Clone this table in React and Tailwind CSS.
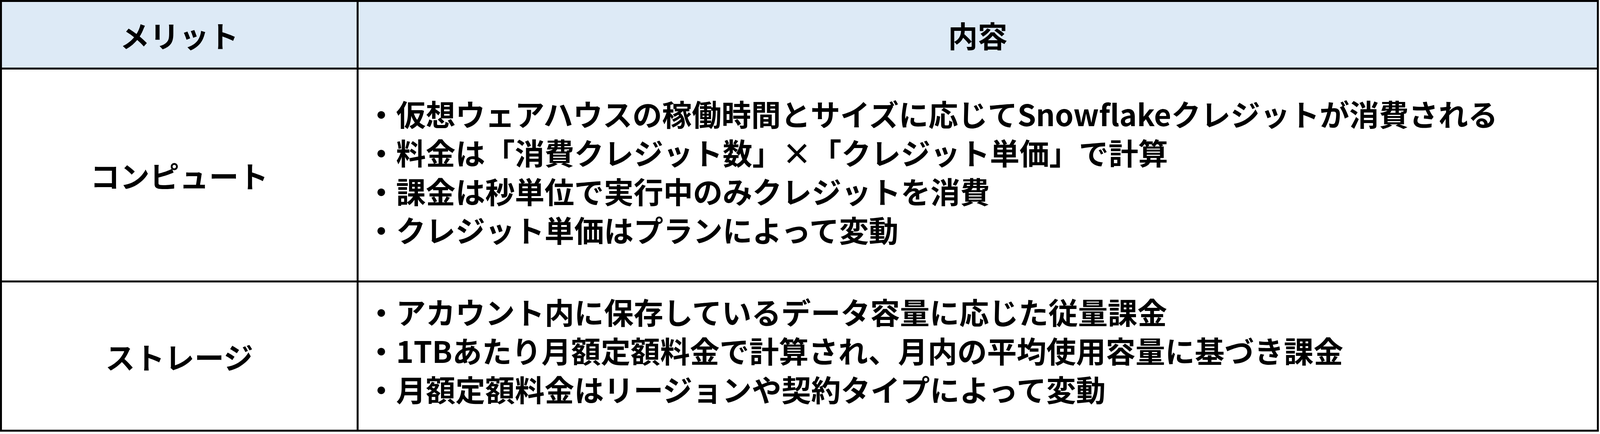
const rows = [
    {
        label: "コンピュート",
        size: "h-[545px] border-b-[5px]",
        pad: "pb-[18px]",
        items: [
            "・仮想ウェアハウスの稼働時間とサイズに応じてSnowflakeクレジットが消費される",
            "・料金は「消費クレジット数」×「クレジット単価」で計算",
            "・課金は秒単位で実行中のみクレジットを消費",
            "・クレジット単価はプランによって変動",
        ],
    },
    {
        label: "ストレージ",
        size: "flex-1",
        pad: "pb-[30px]",
        items: [
            "・アカウント内に保存しているデータ容量に応じた従量課金",
            "・1TBあたり月額定額料金で計算され、月内の平均使用容量に基づき課金",
            "・月額定額料金はリージョンや契約タイプによって変動",
        ],
    },
];

const App = () => {
    return (
        <div className="h-screen flex flex-col overflow-hidden bg-white font-['Noto_Sans_CJK_JP',sans-serif] font-bold text-black">
            <div className="flex-1 mb-[6px] mr-[3px] border-[5px] border-black flex flex-col">
                {/* ヘッダー行 */}
                <div className="flex h-[173px] shrink-0 border-b-[5px] border-black bg-[#ddeaf6]">
                    <div className="w-[913px] shrink-0 border-r-[5px] border-black flex items-center justify-center text-[76px]">
                        メリット
                    </div>
                    <div className="flex-1 min-w-0 flex items-center justify-center text-[76px]">内容</div>
                </div>

                {rows.map((row) => (
                    <div key={row.label} className={`flex shrink-0 border-black ${row.size}`}>
                        <div className="w-[913px] shrink-0 border-r-[5px] border-black flex items-center justify-center text-[76px]">
                            {row.label}
                        </div>
                        <div className={`flex-1 min-w-0 flex flex-col justify-center pl-[20px] text-[76px] leading-[99px] ${row.pad}`}>
                            {row.items.map((t) => (
                                <p key={t} className="whitespace-nowrap">{t}</p>
                            ))}
                        </div>
                    </div>
                ))}
            </div>
        </div>
    );
};

export default App;
